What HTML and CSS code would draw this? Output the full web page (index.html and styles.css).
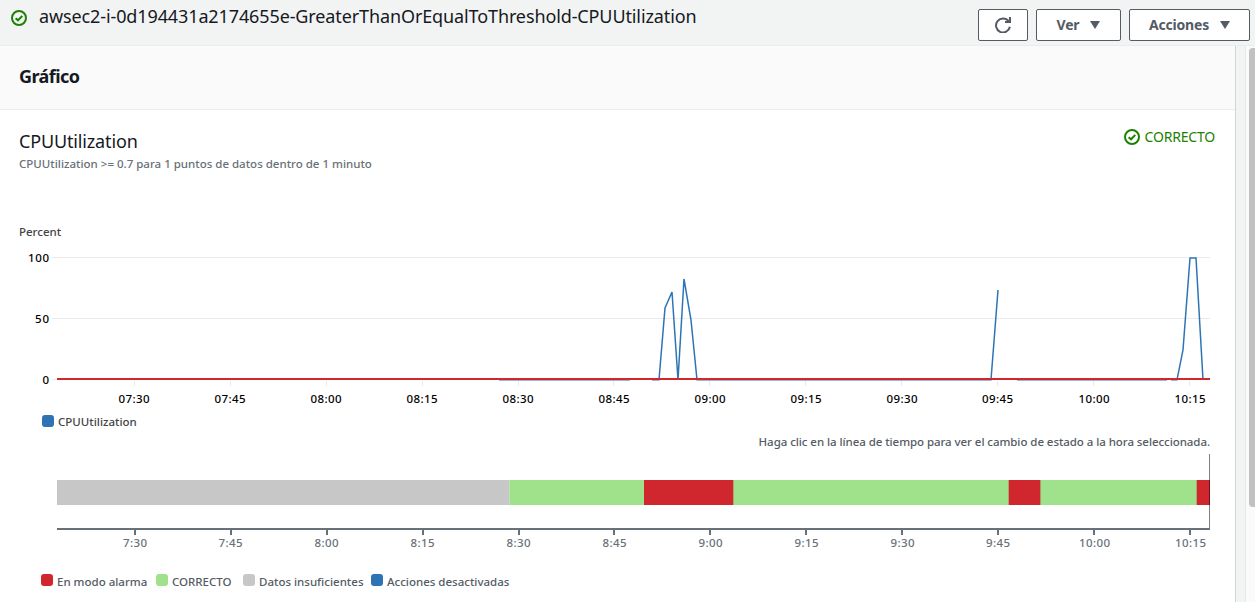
FILE: index.html
```
<!DOCTYPE html>
<html lang="es">
<head>
<meta charset="utf-8">
<title>CPUUtilization</title>
<link rel="stylesheet" href="styles.css">
</head>
<body>
<header class="topbar">
  <div class="heading">
    <svg class="check" viewBox="0 0 16 16"><circle cx="8" cy="8" r="7"/><path d="M4.6 8.2 7 10.3 11.3 5.9"/></svg>
    <h1 class="title">awsec2-i-0d194431a2174655e-GreaterThanOrEqualToThreshold-CPUUtilization</h1>
  </div>
  <div class="actions">
    <button class="btn btn-refresh" aria-label="Actualizar"><svg class="refresh" viewBox="0 0 16 16"><path d="M14.9 9.8A7 7 0 1 1 13.6 4.2M15 0V5H10"/></svg></button>
    <button class="btn btn-view"><span>Ver</span><i class="caret"></i></button>
    <button class="btn btn-more"><span>Acciones</span><i class="caret"></i></button>
  </div>
</header>
<div class="content">
  <main class="panel">
    <div class="panel-head"><h2>Gráfico</h2></div>
    <div class="metric">
      <div>
        <h3 class="metric-name">CPUUtilization</h3>
        <p class="metric-rule">CPUUtilization &gt;= 0.7 para 1 puntos de datos dentro de 1 minuto</p>
      </div>
      <div class="status"><svg class="check" viewBox="0 0 16 16"><circle cx="8" cy="8" r="7"/><path d="M4.6 8.2 7 10.3 11.3 5.9"/></svg><span>CORRECTO</span></div>
    </div>
    <div class="unit">Percent</div>
    <svg class="chart" viewBox="0 240 1235 170">
      <path class="grid" d="M52 257.5H1210M52 318.5H1210M52 379.5H1210"/>
      <path class="grid" d="M134.5 381v5M230.5 381v5M326.5 381v5M422.5 381v5M518.5 381v5M613.5 381v5M709.5 381v5M805.5 381v5M901.5 381v5M997.5 381v5M1093.5 381v5M1189.5 381v5"/>
      <path class="series" d="M499 379.8H630M652 379.8H659L665 308L672 292L678 379.8L684 279L691 320L697 379.8H991L998 290M1017 379.8H1167M1171 379.8H1177L1183 350L1190 258H1196L1203 379.8"/>
      <path class="threshold" d="M57 379H1210"/>
      <g class="ylab"><text x="49" y="262" textLength="21">100</text><text x="49" y="323" textLength="14">50</text><text x="49" y="384" textLength="7">0</text></g>
      <g class="xlab"><text x="134" y="403" textLength="31">07:30</text><text x="230" y="403" textLength="31">07:45</text><text x="326" y="403" textLength="31">08:00</text><text x="422" y="403" textLength="31">08:15</text><text x="518" y="403" textLength="31">08:30</text><text x="614" y="403" textLength="31">08:45</text><text x="710" y="403" textLength="31">09:00</text><text x="806" y="403" textLength="31">09:15</text><text x="902" y="403" textLength="31">09:30</text><text x="997.500" y="403" textLength="31">09:45</text><text x="1094" y="403" textLength="31">10:00</text><text x="1190" y="403" textLength="31">10:15</text></g>
    </svg>
    <div class="legend legend-series"><span class="key"><i class="swatch blue"></i>CPUUtilization</span></div>
    <p class="hint">Haga clic en la línea de tiempo para ver el cambio de estado a la hora seleccionada.</p>
    <svg class="timeline" viewBox="0 454 1235 100">
      <path class="f-grey" d="M57 480H509.500V505H57z"/>
      <path class="f-green" d="M509.500 480H1197V505H509.500z"/>
      <path class="f-red" d="M644 480H733.300V505H644zM1008.700 480H1040.400V505H1008.700zM1196.700 480H1210V505H1196.700z"/>
      <path class="cursor" d="M1209.500 454V528"/>
      <path class="axis" d="M57 529H1210M135 529V535M231 529V535M327 529V535M423 529V535M519 529V535M614 529V535M710 529V535M806 529V535M902 529V535M998 529V535M1094 529V535M1190 529V535"/>
      <g class="tlab"><text x="135" y="547" textLength="24">7:30</text><text x="230.500" y="547" textLength="24">7:45</text><text x="326.500" y="547" textLength="24">8:00</text><text x="422.500" y="547" textLength="24">8:15</text><text x="518.500" y="547" textLength="24">8:30</text><text x="614.500" y="547" textLength="24">8:45</text><text x="710.500" y="547" textLength="24">9:00</text><text x="806.500" y="547" textLength="24">9:15</text><text x="902.500" y="547" textLength="24">9:30</text><text x="998" y="547" textLength="24">9:45</text><text x="1094.500" y="547" textLength="31">10:00</text><text x="1190.500" y="547" textLength="31">10:15</text></g>
    </svg>
    <div class="legend legend-states">
      <span class="key"><i class="swatch red"></i><span>En modo alarma</span></span>
      <span class="key"><i class="swatch green"></i><span>CORRECTO</span></span>
      <span class="key"><i class="swatch grey"></i><span>Datos insuficientes</span></span>
      <span class="key"><i class="swatch blue"></i><span>Acciones desactivadas</span></span>
    </div>
  </main>
  <div class="scrollbar"><div class="thumb"></div></div>
</div>
</body>
</html>
```
FILE: styles.css
```
* { box-sizing: border-box; }
body { margin: 0; width: 1255px; height: 602px; overflow: hidden; background: #f2f3f3; color: #16191f; font-family: "Noto Sans", "Open Sans", sans-serif; font-size: 11.5px; font-weight: 500; display: flex; flex-direction: column; }
h1, h2, h3, p { margin: 0; }
.topbar { height: 46px; flex: none; display: flex; justify-content: space-between; border-bottom: 1px solid #eaeded; padding: 0 5px 0 11px; }
.heading { display: flex; gap: 12px; padding-top: 4px; }
.check { width: 16px; height: 16px; fill: none; stroke: #1d8102; stroke-width: 2; flex: none; }
.heading .check { margin-top: 6px; }
.title { font-size: 18px; font-weight: 400; line-height: 24px; letter-spacing: -.115px; white-space: nowrap; }
.actions { display: flex; gap: 8px; padding-top: 9px; }
.btn { height: 32px; border: 1px solid #545b64; border-radius: 2px; background: #fff; color: #545b64; font: 700 14px/20px "Noto Sans", sans-serif; letter-spacing: -.2px; padding: 0; display: flex; justify-content: center; align-items: center; gap: 11px; }
.btn-refresh { width: 50px; }
.btn-view { width: 85px; }
.btn-more { width: 121px; }
.refresh { width: 16px; height: 16px; fill: none; stroke: #545b64; stroke-width: 2; }
.caret { border: 5px solid transparent; border-top: 8px solid #545b64; border-bottom: 0; }
.content { flex: 1; display: flex; justify-content: space-between; min-height: 0; }
.panel { width: 1236px; background: #fff; border-right: 1px solid #d0d6d8; display: flex; flex-direction: column; }
.panel-head { height: 64px; flex: none; background: #fafafa; border-bottom: 1px solid #eaeded; padding: 18px 19px; }
.panel-head h2 { font-size: 18px; line-height: 25px; font-weight: 700; letter-spacing: -.55px; }
.metric { height: 115px; flex: none; padding: 19px 20px 0 19px; display: flex; justify-content: space-between; }
.metric-name { font-size: 18px; line-height: 24px; font-weight: 400; letter-spacing: -.15px; }
.metric-rule { color: #687078; line-height: 16px; margin-top: 3px; }
.status { display: flex; gap: 5px; height: 16px; line-height: 16px; align-items: center; color: #1d8102; font-size: 14px; font-weight: 400; letter-spacing: -.2px; }
.unit { height: 15px; flex: none; line-height: 14px; padding-left: 19px; color: #444; }
.chart { width: 1235px; height: 170px; flex: none; }
.grid { stroke: #eaeaea; fill: none; }
.series { stroke: #2e74b5; stroke-width: 1.500; fill: none; }
.threshold { stroke: #d0262e; stroke-width: 2; }
text { font-size: 11.5px; }
.ylab { text-anchor: end; fill: #000; }
.xlab { text-anchor: middle; fill: #000; }
.tlab { text-anchor: middle; fill: #687078; }
.legend { display: flex; flex: none; }
.key { display: flex; white-space: nowrap; line-height: 14px; }
.swatch { width: 12px; height: 12px; border-radius: 3px; margin-right: 4px; }
.red { background: #d0262e; }
.green { background: #a0e18b; }
.grey { background: #c7c7c7; }
.blue { background: #2e74b5; }
.legend-series { height: 25px; padding: 5px 0 0 42px; color: #444; }
.hint { height: 19px; flex: none; text-align: right; padding-right: 25px; line-height: 14px; color: #545b64; letter-spacing: -.06px; }
.timeline { width: 1235px; height: 100px; flex: none; }
.f-grey { fill: #c7c7c7; }
.f-green { fill: #a0e18b; }
.f-red { fill: #d0262e; }
.cursor { stroke: #000; stroke-opacity: .5; }
.axis { stroke: #687078; stroke-width: 2; }
.legend-states { display: grid; grid-template-columns: 115px 87px 128px auto; padding: 20px 0 0 41px; color: #545b64; }
.legend-states .key span { padding-top: 1px; }
.scrollbar { width: 10px; background: #fafafa; border-left: 1px solid #e8e8e8; padding: 2px 0 0 3px; overflow: hidden; }
.thumb { width: 6px; height: 459px; background: #c1c1c1; border-radius: 4px 0 0 4px; }
```
